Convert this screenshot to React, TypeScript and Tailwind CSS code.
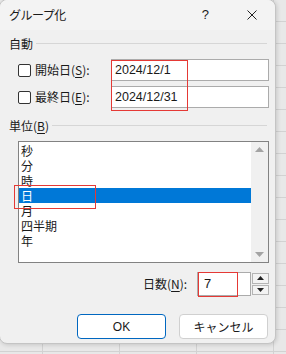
import React from "react";

const jp = { fontFamily: '"Noto Sans CJK JP", "Noto Sans", sans-serif' };
const num = { fontFamily: '"Liberation Sans", "Noto Sans CJK JP", sans-serif' };

function CheckBox() {
  return <div className="w-[13px] h-[13px] border border-[#333] rounded-[2px] bg-white shrink-0" />;
}

function U({ children }: { children: React.ReactNode }) {
  return <span className="underline underline-offset-2">{children}</span>;
}

export default function App() {
  const items = ["秒", "分", "時", "日", "月", "四半期", "年"];
  return (
    <div
      className="w-[286px] h-[354px] overflow-hidden bg-[#e8e8e8] text-[12px] text-[#1a1a1a]"
      style={{
        ...jp,
        backgroundImage:
          "repeating-linear-gradient(to bottom, transparent 0 21px, #d2d2d2 21px 22px), repeating-linear-gradient(to right, transparent 0 42px, #d2d2d2 42px 43px, transparent 43px 77px)",
      }}
    >
      <div className="relative w-[277px] h-[345px] bg-[#f0f0f0] border border-[#c4c4c4] rounded-[8px] ml-[-1px] mt-[-1px] shadow-[1px_1px_4px_rgba(0,0,0,0.15)] flex flex-col">
        {/* title bar */}
        <div className="h-[30px] flex items-center pl-[9px] bg-[#f3f3f3] rounded-t-[8px]">
          <span className="text-[12px] tracking-[-0.5px]">グループ化</span>
          <span className="ml-auto mr-[38px] text-[13px]" style={num}>?</span>
          <svg width="10" height="10" viewBox="0 0 10 10" className="mr-[18px]">
            <path d="M0.5 0.5 L9.5 9.5 M9.5 0.5 L0.5 9.5" stroke="#222" strokeWidth="1" />
          </svg>
        </div>
        {/* 自動 group */}
        <div className="flex items-center mt-[6px] pl-[9px] pr-[8px] h-[15px]">
          <span>自動</span>
          <div className="flex-1 h-px bg-[#d6d6d6] ml-[3px]" />
        </div>
        <div className="flex items-center mt-[8px] h-[22px] pl-[18px]">
          <CheckBox />
          <span className="ml-[4px] w-[76px]">開始日(<U>S</U>):</span>
          <div className="w-[158px] h-[22px] bg-white border border-[#ababab] flex items-center pl-[3px] text-[12.5px]" style={num}>
            2024/12/1
          </div>
        </div>
        <div className="flex items-center mt-[5px] h-[22px] pl-[18px]">
          <CheckBox />
          <span className="ml-[4px] w-[76px]">最終日(<U>E</U>):</span>
          <div className="w-[158px] h-[22px] bg-white border border-[#ababab] flex items-center pl-[3px] text-[12.5px]" style={num}>
            2024/12/31
          </div>
        </div>
        {/* 単位 group */}
        <div className="flex items-center mt-[10px] pl-[9px] pr-[8px] h-[15px]">
          <span>単位(<U>B</U>)</span>
          <div className="flex-1 h-px bg-[#d6d6d6] ml-[3px]" />
        </div>
        <div className="ml-[18px] mt-[8px] w-[251px] h-[122px] bg-white border border-[#828282] flex">
          <div className="flex-1 pt-[1px]">
            {items.map((it) => (
              <div
                key={it}
                className={
                  "h-[15px] leading-[15px] pl-[2px] " +
                  (it === "日" ? "bg-[#0078d7] text-white" : "")
                }
              >
                {it}
              </div>
            ))}
          </div>
          <div className="w-[17px] bg-[#f0f0f0] flex flex-col items-center justify-between py-[5px]">
            <svg width="9" height="5" viewBox="0 0 9 5"><path d="M0 5 L4.5 0 L9 5Z" fill="#a3a3a3" /></svg>
            <svg width="9" height="5" viewBox="0 0 9 5"><path d="M0 0 L4.5 5 L9 0Z" fill="#a3a3a3" /></svg>
          </div>
        </div>
        {/* 日数 */}
        <div className="flex items-center mt-[9px] h-[24px] pl-[143px]">
          <span className="w-[54px]">日数(<U>N</U>):</span>
          <div className="w-[54px] h-[24px] bg-white border border-[#ababab] flex items-center pl-[6px] text-[13px]" style={num}>
            7
          </div>
          <div className="ml-[1px] w-[17px] h-[22px] flex flex-col gap-[1px]">
            <div className="flex-1 border border-[#b5b5b5] bg-[#f3f3f3] flex items-center justify-center">
              <svg width="7" height="4" viewBox="0 0 7 4"><path d="M0 4 L3.5 0 L7 4Z" fill="#222" /></svg>
            </div>
            <div className="flex-1 border border-[#b5b5b5] bg-[#f3f3f3] flex items-center justify-center">
              <svg width="7" height="4" viewBox="0 0 7 4"><path d="M0 0 L3.5 4 L7 0Z" fill="#222" /></svg>
            </div>
          </div>
        </div>
        {/* buttons */}
        <div className="flex mt-[18px] pl-[77px] gap-[13px]">
          <div className="w-[89px] h-[25px] bg-white border-[1.5px] border-[#0067c0] rounded-[4px] flex items-center justify-center" style={num}>
            OK
          </div>
          <div className="w-[89px] h-[25px] bg-white border border-[#d0d0d0] rounded-[4px] flex items-center justify-center">
            キャンセル
          </div>
        </div>

        {/* red annotation boxes */}
        <div className="absolute left-[111px] top-[60px] w-[77px] h-[51px] border-[1.5px] border-[#e53935] pointer-events-none" />
        <div className="absolute left-[14px] top-[185px] w-[82px] h-[24px] border-[1.5px] border-[#e53935] pointer-events-none" />
        <div className="absolute left-[198px] top-[272px] w-[40px] h-[25px] border-[1.5px] border-[#e53935] pointer-events-none" />
      </div>
    </div>
  );
}
